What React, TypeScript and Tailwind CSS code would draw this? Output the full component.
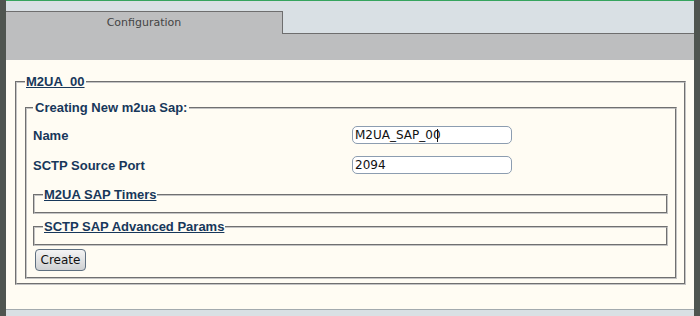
import React from "react";

const sans = "font-['Liberation_Sans',Arial,sans-serif]";
const dejavu = "font-['DejaVu_Sans',Verdana,sans-serif]";

function Field({ label, value, caret }: { label: string; value: string; caret?: boolean }) {
  return (
    <div className="grid h-[30px] grid-cols-[319px_160px] items-center">
      <span className={`${sans} text-[13px] font-bold leading-[15px] text-[#17375a]`}>{label}</span>
      <div className="relative h-[18px]">
        <input
          readOnly
          value={value}
          className={`${dejavu} block h-[18px] w-[160px] rounded-[5px] border border-[#8c9db0] bg-white px-[2px] text-[12px] leading-[16px] text-[#111] outline-none`}
        />
        {caret && <span className="absolute left-[85px] top-[3px] h-[13px] w-px bg-[#111]" />}
      </div>
    </div>
  );
}

function SubSection({ title, className }: { title: string; className?: string }) {
  return (
    <fieldset className={`border-2 border-[#c4c4c4] [border-style:groove] pr-[7px] pl-[8px] pb-[10px] ${className ?? ""}`}>
      <legend className={`${sans} px-[1px] text-[13px] font-bold leading-[15px] text-[#17375a] underline`}>{title}</legend>
    </fieldset>
  );
}

export default function App() {
  return (
    <div className="flex h-[316px] w-[700px] overflow-hidden bg-[#4f5550]">
      <div className="w-[6px] shrink-0" />
      <div className="flex w-[688px] flex-col">
        <div className="h-px bg-[#36a45e]" />

        <div className="flex h-[33px] items-end bg-[#d9e0e4]">
          <div className={`${dejavu} h-[23px] w-[277px] border-t border-r border-[#6e6e6e] bg-[#bdbebf] pt-[4px] text-center text-[11px] leading-[13px] text-[#444]`}>
            Configuration
          </div>
          <div className="h-full flex-1 border-b border-[#6e6e6e]" />
        </div>

        <div className="h-[26px] bg-[#bdbebf]" />

        <div className="h-[249px] bg-[#fffcf3] pt-[14px] pl-[9px] pr-[8px]">
          <fieldset className="border-2 border-[#c4c4c4] [border-style:groove] pl-[8px] pr-[7px] pt-[11px] pb-[4px]">
            <legend className={`${sans} px-[1px] text-[13px] font-bold leading-[15px] text-[#17375a] underline`}>M2UA_00</legend>

            <fieldset className="border-2 border-[#c4c4c4] [border-style:groove] pl-[6px] pr-[7px] pt-[5px] pb-[6px]">
              <legend className={`${sans} px-[2px] text-[13px] font-bold leading-[15px] text-[#17375a]`}>Creating New m2ua Sap:</legend>

              <Field label="Name" value="M2UA_SAP_00" caret />
              <Field label="SCTP Source Port" value="2094" />

              <SubSection title="M2UA SAP Timers" className="mt-[7px]" />
              <SubSection title="SCTP SAP Advanced Params" className="mt-[5px]" />

              <button
                className={`${dejavu} mt-[3px] ml-[2px] block h-[22px] w-[51px] rounded-[4px] border border-[#5e6f80] bg-gradient-to-b from-[#f4f4f4] to-[#cfd1d3] text-[12px] leading-[14px] text-[#111]`}
              >
                Create
              </button>
            </fieldset>
          </fieldset>
        </div>

        <div className="h-[7px] border-t border-[#a3aaae] bg-[#d9e0e4]" />
      </div>
      <div className="w-[6px] shrink-0" />
    </div>
  );
}
